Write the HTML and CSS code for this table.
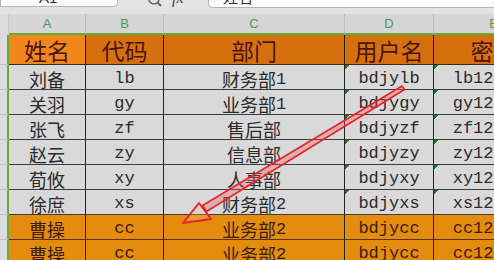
FILE: index.html
```html
<!DOCTYPE html>
<html lang="zh-CN">
<head>
<meta charset="utf-8">
<link rel="stylesheet" href="styles.css">
</head>
<body>
<div class="page">
  <div class="topbar">
    <div class="namebox"><span class="cut">A1</span></div>
    <div class="tools">
      <svg class="mag" width="14" height="10" viewBox="0 0 14 10"><circle cx="6" cy="-1" r="5" fill="none" stroke="#666" stroke-width="1.5"/><line x1="9.5" y1="2.5" x2="13" y2="6" stroke="#666" stroke-width="2"/></svg>
      <span class="fx cut">fx</span>
    </div>
    <div class="formula"><span class="cut cjk">姓名</span></div>
  </div>
  <div class="grid">
    <div class="ch corner"></div>
    <div class="ch">A</div>
    <div class="ch">B</div>
    <div class="ch">C</div>
    <div class="ch">D</div>
    <div class="ch">E</div>

    <div class="rh"></div>
    <div class="hd hd-a">姓名</div>
    <div class="hd">代码</div>
    <div class="hd">部门</div>
    <div class="hd">用户名</div>
    <div class="hd">密码</div>

    <div class="rh"></div><div class="c">刘备</div><div class="c m">lb</div><div class="c">财务部<span class="m">1</span></div><div class="c m tx">bdjylb</div><div class="c m tx">lb123456</div>
    <div class="rh"></div><div class="c">关羽</div><div class="c m">gy</div><div class="c">业务部<span class="m">1</span></div><div class="c m tx">bdjygy</div><div class="c m tx">gy123456</div>
    <div class="rh"></div><div class="c">张飞</div><div class="c m">zf</div><div class="c">售后部</div><div class="c m tx">bdjyzf</div><div class="c m tx">zf123456</div>
    <div class="rh"></div><div class="c">赵云</div><div class="c m">zy</div><div class="c">信息部</div><div class="c m tx">bdjyzy</div><div class="c m tx">zy123456</div>
    <div class="rh"></div><div class="c">荀攸</div><div class="c m">xy</div><div class="c">人事部</div><div class="c m tx">bdjyxy</div><div class="c m tx">xy123456</div>
    <div class="rh"></div><div class="c">徐庶</div><div class="c m">xs</div><div class="c">财务部<span class="m">2</span></div><div class="c m tx">bdjyxs</div><div class="c m tx">xs123456</div>
    <div class="rh"></div><div class="c o">曹操</div><div class="c o m">cc</div><div class="c o">业务部<span class="m">2</span></div><div class="c o m tx">bdjycc</div><div class="c o m tx">cc123456</div>
    <div class="rh"></div><div class="c o">曹操</div><div class="c o m">cc</div><div class="c o">业务部<span class="m">2</span></div><div class="c o m tx">bdjycc</div><div class="c o m tx">cc123456</div>
  </div>
  <svg class="arrow" width="494" height="260" viewBox="0 0 494 260">
    <polygon points="404.5,89.5 206.5,211.5 202.5,205.5 402,86" fill="rgba(240,90,90,0.35)" stroke="#e4252b" stroke-width="1.6" stroke-linejoin="round"/>
    <polygon points="183,223 199,203 211,219" fill="rgba(255,190,150,0.25)" stroke="#e4252b" stroke-width="2" stroke-linejoin="round"/>
  </svg>
</div>
</body>
</html>
```
FILE: styles.css
```css
* { box-sizing: border-box; }
html, body { margin: 0; padding: 0; }
body {
  width: 494px;
  height: 260px;
  overflow: hidden;
  background: #e3e3e3;
  font-family: "Noto Sans CJK SC", "Liberation Serif", serif;
}
.page { position: relative; width: 494px; height: 260px; overflow: hidden; }

.topbar {
  height: 14px;
  display: flex;
  align-items: flex-start;
  background: #e4e4e4;
}
.namebox {
  width: 118px;
  height: 7px;
  background: #fbfbfb;
  border: 1px solid #b4b4b4;
  border-top: none;
  border-radius: 0 0 5px 0;
  overflow: hidden;
  padding-left: 38px;
}
.cut {
  display: block;
  font-family: "Liberation Sans", sans-serif;
  font-size: 15px;
  line-height: 15px;
  margin-top: -10px;
  color: #333;
}
.cut.cjk { font-family: "Noto Sans CJK SC", sans-serif; margin-top: -11px; }
.tools {
  width: 90px;
  height: 10px;
  display: flex;
  overflow: hidden;
  padding-left: 30px;
  gap: 10px;
}
.mag { display: block; }
.fx { font-family: "Liberation Serif", serif; font-style: italic; font-size: 16px; color: #444; }
.formula {
  flex: 1;
  height: 8px;
  background: #fbfbfb;
  border: 1px solid #b4b4b4;
  border-top: none;
  border-right: none;
  border-radius: 0 0 0 5px;
  overflow: hidden;
  padding-left: 14px;
}

.grid {
  display: grid;
  grid-template-columns: 9px 77px 78px 181px 89px 120px;
  grid-template-rows: 21px 30px repeat(8, 25px);
  width: 554px;
}
.ch {
  background: #d6d6d6;
  border-right: 1px solid #bdbdbd;
  border-bottom: 2px solid #62ab3f;
  color: #4f9a4f;
  font-family: "Liberation Sans", sans-serif;
  font-size: 13px;
  display: flex;
  align-items: center;
  justify-content: center;
}
.ch.corner { border-bottom-color: #d6d6d6; border-right: 1px solid #c8c8c8; background: #dcdcdc; }
.rh {
  background: #dcdcdc;
  border-right: 2px solid #62ab3f;
  border-bottom: 1px solid #c4c4c4;
}
.hd {
  background: #d6700f;
  color: #4a1406;
  font-size: 23px;
  line-height: 1;
  display: flex;
  align-items: flex-end;
  justify-content: center;
  padding-bottom: 2px;
  border-right: 1px solid #2a1a10;
  border-bottom: 1px solid #3a2a1a;
}
.hd-a { background: #f0861c; }
.c {
  background: #d9d9d9;
  color: #2b2b2b;
  font-size: 18px;
  line-height: 1;
  display: flex;
  align-items: flex-end;
  justify-content: center;
  padding-bottom: 1px;
  border-right: 1px solid #222;
  border-bottom: 1px solid #3c3c3c;
  white-space: nowrap;
}
.m { font-family: "Liberation Mono", monospace; font-size: 17px; }
.c.m { padding-bottom: 2px; }
.c.o { background: #e38c0d; color: #3a1d06; border-bottom-color: #5a3408; }
.tx {
  background-image: linear-gradient(135deg, #1f7a22 0, #1f7a22 3px, transparent 3px);
}

.arrow {
  position: absolute;
  left: 0;
  top: 0;
  pointer-events: none;
}
```
